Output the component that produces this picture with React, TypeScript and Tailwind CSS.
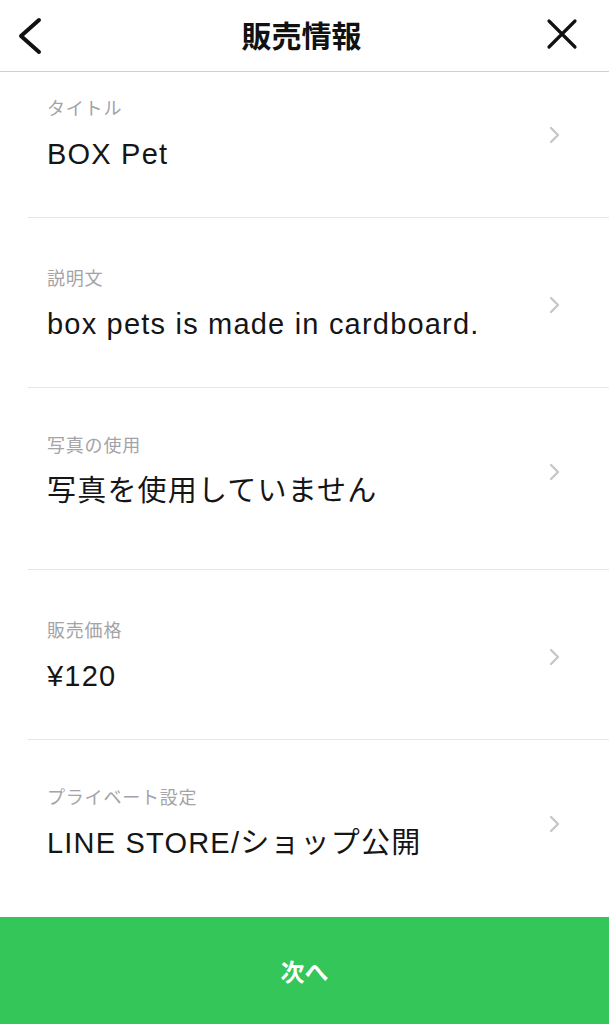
import React from 'react';

type Row = {
  label: string;
  value: string;
  rowClass: string;
};

const rows: Row[] = [
  { label: 'タイトル', value: 'BOX Pet', rowClass: 'h-[146px] pt-[25px]' },
  { label: '説明文', value: 'box pets is made in cardboard.', rowClass: 'h-[170px] pt-[49px]' },
  { label: '写真の使用', value: '写真を使用していません', rowClass: 'h-[182px] pt-[46px]' },
  { label: '販売価格', value: '¥120', rowClass: 'h-[170px] pt-[49px]' },
  { label: 'プライベート設定', value: 'LINE STORE/ショップ公開', rowClass: 'h-[177px] pt-[46px]' },
];

const Chevron = () => (
  <svg width="12" height="18" viewBox="0 0 12 18" fill="none">
    <path d="M2 2l7 7-7 7" stroke="#c7c7cc" strokeWidth="2.4" strokeLinecap="round" strokeLinejoin="round" />
  </svg>
);

const App: React.FC = () => {
  return (
    <div className="w-[609px] h-[1024px] bg-white flex flex-col overflow-hidden font-['Liberation_Sans','Noto_Sans_CJK_JP',sans-serif]">
      {/* Header */}
      <div className="h-[72px] shrink-0 flex items-center justify-between px-[16px] border-b border-[#cfcfcf]">
        <svg width="28" height="40" viewBox="0 0 28 40" fill="none">
          <path d="M23 4L5 20l18 16" stroke="#111" strokeWidth="4" strokeLinecap="round" strokeLinejoin="round" />
        </svg>
        <h1 className="ml-[14px] text-[30px] font-bold text-[#111] font-['Noto_Sans_CJK_JP',sans-serif] leading-none -mt-[4px]">
          販売情報
        </h1>
        <svg width="34" height="34" viewBox="0 0 34 34" fill="none" className="mr-[14px] -mt-[3px]">
          <path d="M4 4l26 26M30 4L4 30" stroke="#111" strokeWidth="3.2" strokeLinecap="round" />
        </svg>
      </div>

      {/* Rows */}
      <div className="flex-1 flex flex-col">
        {rows.map((row, i) => (
          <div key={row.label} className={`${row.rowClass} shrink-0 ml-[28px] ${i < rows.length - 1 ? 'border-b border-[#e6e6e6]' : ''}`}>
            <div className="flex items-center justify-between pl-[19px] pr-[48px]">
              <div>
                <div className="text-[18px] leading-[24px] tracking-[0.8px] text-[#a3a3a8]">{row.label}</div>
                <div className="mt-[15px] text-[29px] leading-[36px] tracking-[1.2px] text-[#151515]">{row.value}</div>
              </div>
              <Chevron />
            </div>
          </div>
        ))}
      </div>

      {/* Button */}
      <button className="h-[107px] shrink-0 w-full bg-[#34c659] text-white text-[24px] font-bold font-['Noto_Sans_CJK_JP',sans-serif]">
        次へ
      </button>
    </div>
  );
};

export default App;
